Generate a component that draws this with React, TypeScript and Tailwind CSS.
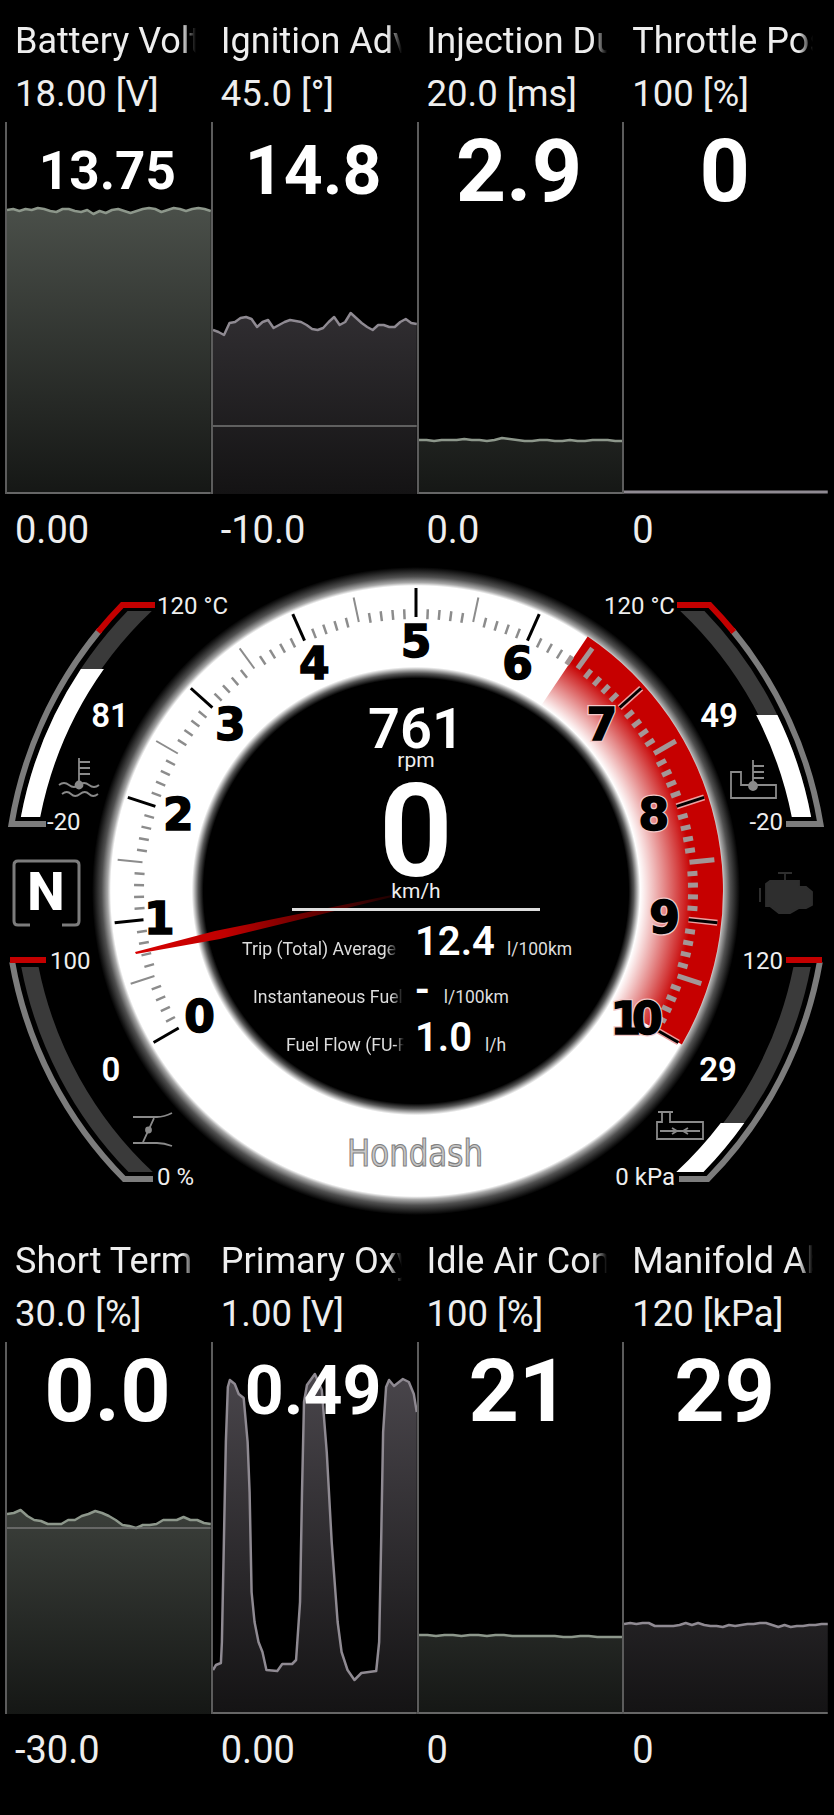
const CX = 416;
const CY = 891;

type Cell = {
  name: string;
  max: string;
  min: string;
  value: string;
  size: string;
  tone: "green" | "purple";
  pts?: number[];
  raw?: [number, number][];
  zero?: number;
  floor?: boolean;
  thick?: boolean;
};

const flat = (base: number, d: number[]) => d.map((n) => base + n);

const top: Cell[] = [
  {
    name: "Battery Voltage", max: "18.00 [V]", min: "0.00", value: "13.75", size: "text-[53px]", tone: "green", floor: true,
    pts: [88, 87, 89, 87, 88, 86, 87, 89, 90, 87, 87, 89, 90, 88, 92, 89, 91, 88, 87, 89, 91, 89, 87, 86, 87, 90, 88, 86, 87, 89, 87, 86, 87, 89],
  },
  {
    name: "Ignition Advance", max: "45.0 [°]", min: "-10.0", value: "14.8", size: "text-[68px]", tone: "purple", zero: 304,
    pts: [208, 210, 213, 201, 200, 196, 195, 197, 205, 200, 198, 206, 203, 200, 198, 199, 200, 203, 207, 208, 206, 200, 195, 203, 200, 191, 196, 201, 205, 208, 203, 203, 205, 205, 200, 197, 201, 202],
  },
  {
    name: "Injection Duration", max: "20.0 [ms]", min: "0.0", value: "2.9", size: "text-[88px]", tone: "green", floor: true,
    pts: flat(318, [0, 0, 1, 0, 0, 0, -1, 0, 0, 1, 0, -2, -1, 0, 1, 1, 0, 0, 1, 1, 0, 1, 1, 0, 0, 0, 1, 1]),
  },
  { name: "Throttle Position", max: "100 [%]", min: "0", value: "0", size: "text-[88px]", tone: "purple", thick: true, pts: [370, 370] },
];

const bottom: Cell[] = [
  {
    name: "Short Term Fuel Trim", max: "30.0 [%]", min: "-30.0", value: "0.0", size: "text-[88px]", tone: "green", zero: 186,
    pts: [172, 171, 168, 174, 178, 179, 182, 182, 182, 178, 178, 174, 172, 169, 171, 174, 178, 183, 184, 186, 183, 183, 182, 178, 178, 178, 175, 178, 178, 181, 182],
  },
  {
    name: "Primary Oxygen Sensor", max: "1.00 [V]", min: "0.00", value: "0.49", size: "text-[68px]", tone: "purple", floor: true,
    raw: [[0, 328], [3, 323], [8, 321], [9, 300], [11, 200], [13, 100], [15, 45], [17, 38], [22, 42], [26, 52], [31, 56], [35, 100], [37, 150], [39, 250], [42, 280], [46, 300], [50, 310], [54, 328], [65, 329], [70, 322], [80, 322], [84, 318], [88, 260], [90, 150], [92, 60], [95, 43], [103, 32], [110, 48], [115, 110], [120, 200], [126, 280], [130, 310], [136, 328], [143, 338], [150, 331], [165, 329], [168, 300], [170, 200], [172, 90], [175, 45], [178, 38], [183, 44], [192, 37], [198, 40], [203, 52], [206, 70]],
  },
  {
    name: "Idle Air Control", max: "100 [%]", min: "0", value: "21", size: "text-[88px]", tone: "green", floor: true,
    pts: flat(293, [0, 0, 1, 0, 0, 1, 0, 0, 1, 0, 0, 1, 1, 1, 1, 1, 1, 2, 2, 1, 1, 2, 2, 2, 2]),
  },
  {
    name: "Manifold Absolute", max: "120 [kPa]", min: "0", value: "29", size: "text-[88px]", tone: "purple", floor: true,
    pts: flat(282, [0, -1, 0, -1, -1, 2, 2, 2, 2, 1, -1, 1, -1, 1, 2, 2, 3, 1, 2, 1, 0, 0, -1, -1, 1, 3, 1, 3, 2, 2, 1, 1, 0, 0]),
  },
];

function Chart({ cell, id }: { cell: Cell; id: string }) {
  const pts: [number, number][] =
    cell.raw ?? (cell.pts ?? []).map((y, i, all) => [(i * 206) / (all.length - 1), y]);
  const line = pts.map(([x, y]) => `${x},${y}`).join(" ");
  const green = cell.tone === "green";
  return (
    <div className="relative h-[372px] border-l-2 border-[#5c5c5c]">
      <svg viewBox="0 0 206 372" preserveAspectRatio="none" className="block h-full w-full">
        <defs>
          <linearGradient id={id} gradientUnits="userSpaceOnUse" x1="0" y1="0" x2="0" y2="372">
            <stop offset="0" stopColor={green ? "#5a6059" : "#4e4a50"} />
            <stop offset="1" stopColor={green ? "#151715" : "#141314"} />
          </linearGradient>
        </defs>
        {!cell.thick && <polygon points={`0,372 ${line} 206,372`} fill={`url(#${id})`} />}
        <polyline points={line} fill="none" stroke={green ? "#8d978b" : "#8f8a92"} strokeWidth={cell.thick ? 3 : 2.5} strokeLinejoin="round" />
        {cell.zero && <line x1="0" x2="206" y1={cell.zero} y2={cell.zero} stroke="#777" strokeWidth="1.5" />}
        {cell.floor && <line x1="0" x2="206" y1="371" y2="371" stroke="#666" strokeWidth="2" />}
      </svg>
      <div className={`absolute -left-[3px] right-0 top-[3px] h-[92px] text-center font-bold leading-[92px] text-white ${cell.size}`}>
        {cell.value}
      </div>
    </div>
  );
}

function Strip({ cells, prefix }: { cells: Cell[]; prefix: string }) {
  return (
    <div className="grid shrink-0 grid-cols-4 pl-[5px] pr-[6px] pt-[15px]">
      {cells.map((c, i) => (
        <div key={c.name} className="min-w-0">
          <div className="h-[52px] overflow-hidden whitespace-nowrap pl-[10px] pr-[15px] text-[36px] leading-[52px] text-[#eeeeee]">
            <div className="overflow-hidden [mask-image:linear-gradient(to_right,black_92%,transparent_100%)]">{c.name}</div>
          </div>
          <div className="mb-[2px] h-[53px] whitespace-nowrap pl-[10px] text-[36.5px] leading-[53px] text-[#eeeeee]">{c.max}</div>
          <Chart cell={c} id={`${prefix}${i}`} />
          <div className="mt-[10px] h-[53px] pl-[10px] text-[38px] leading-[53px] text-[#eeeeee]">{c.min}</div>
        </div>
      ))}
    </div>
  );
}

const polar = (r: number, deg: number): [number, number] => {
  const a = (deg * Math.PI) / 180;
  return [CX + r * Math.sin(a), CY - r * Math.cos(a)];
};

const arcX = (r: number, y: number, side: number) => CX + side * Math.sqrt(r * r - (y - CY) ** 2);

function bandPath(r1: number, r2: number, yA: number, yB: number, side: number) {
  const s = side < 0 ? 0 : 1;
  return `M${arcX(r2, yA, side)} ${yA} A${r2} ${r2} 0 0 ${s} ${arcX(r2, yB, side)} ${yB} L${arcX(r1, yB, side)} ${yB} A${r1} ${r1} 0 0 ${1 - s} ${arcX(r1, yA, side)} ${yA} Z`;
}

function railPath(yA: number, yB: number, side: number) {
  const s = side < 0 ? 0 : 1;
  return `M${arcX(410, yA, side)} ${yA} A410 410 0 0 ${s} ${arcX(410, yB, side)} ${yB}`;
}

const mx = (x: number, side: number) => (side < 0 ? x : 832 - x);

function Rails({ side }: { side: number }) {
  return (
    <g fill="none" strokeWidth="6">
      {/* upper gauge */}
      <path d={`${railPath(630, 824, side)} H${mx(46, side)}`} stroke="#7c7c7c" />
      <path d={`M${mx(155, side)} 605 H${arcX(410, 605, side)} A410 410 0 0 ${side < 0 ? 0 : 1} ${arcX(410, 632, side)} 632`} stroke="#c40000" />
      <path d={bandPath(385, 402, 611, 817, side)} fill="#3a3a3a" stroke="none" />
      {/* lower gauge */}
      <path d={`${railPath(962, 1179, side)} H${mx(153, side)}`} stroke="#7c7c7c" />
      <path d={`M${mx(10, side)} 960 H${mx(46, side)}`} stroke="#c40000" />
      <path d={bandPath(385, 402, 967, 1172, side)} fill="#3a3a3a" stroke="none" />
    </g>
  );
}

function Ticks() {
  const out = [];
  for (let i = 0; i <= 100; i++) {
    const deg = -120 + i * 2.4;
    const red = deg > 33;
    const major = i % 10 === 0;
    const half = i % 5 === 0;
    const [r1, r2] = major ? [274, 303] : half ? [275, 300] : [272, 282];
    const [x1, y1] = polar(r1, deg);
    const [x2, y2] = polar(r2, deg);
    const w = major ? 3 : red ? 5 : half ? 2 : 2.5;
    const color = major ? "#000" : red ? "#a39696" : "#8c8c8c";
    out.push(
      <g key={i}>
        {major && red && <line x1={x1} y1={y1} x2={x2} y2={y2} stroke="#eba0a0" strokeWidth="6" />}
        <line x1={x1} y1={y1} x2={x2} y2={y2} stroke={color} strokeWidth={w} />
      </g>,
    );
  }
  return <g>{out}</g>;
}

function Numerals() {
  return (
    <g fontFamily="'DejaVu Sans', sans-serif" fontWeight="700" fontSize="44" textAnchor="middle">
      {[0, 1, 2, 3, 4, 5, 6, 7, 8, 9].map((n) => {
        const [x, y] = polar(n === 1 ? 258 : 250, -120 + n * 24);
        return (
          <g key={n}>
            {n > 6 && (
              <text x={x} y={y + 16} stroke="#f3c8c8" strokeWidth="4" fill="#f3c8c8">
                {n}
              </text>
            )}
            <text x={x} y={y + 16} fill="#000" stroke="#000" strokeWidth="1.5">
              {n}
            </text>
          </g>
        );
      })}
      <text x="632" y="1034" fill="#f3c8c8" stroke="#f3c8c8" strokeWidth="4" letterSpacing="-9">
        10
      </text>
      <text x="632" y="1034" fill="#000" stroke="#000" strokeWidth="1.5" letterSpacing="-9">
        10
      </text>
    </g>
  );
}

function Icons() {
  return (
    <g fill="none" stroke="#8a8a8a" strokeWidth="1.8">
      {/* coolant */}
      <path d="M79 758V783M79 762H90M79 768H90M79 774H90" />
      <circle cx="79" cy="785" r="3.5" fill="#8a8a8a" />
      <path d="M59 785q5-4 10 0t10 0t10 0t10 0M62 794q5-4 9 0t9 0t9 0t9 0" />
      {/* oil */}
      <path d="M731 798V772H741V785H776V798Z" />
      <path d="M753 760V785M753 766H764M753 772H764M753 778H764" />
      <circle cx="753" cy="786" r="4" fill="#8a8a8a" />
      {/* throttle */}
      <path d="M133 1117H157Q164 1117 172 1113M133 1143H157Q164 1143 172 1146M143 1142L154 1118" />
      <circle cx="148.5" cy="1130" r="2.5" fill="#8a8a8a" />
      {/* manifold */}
      <path d="M658 1112H673M662 1112V1122H657V1139H703V1122H670V1112M660 1131H700M672 1128L677 1131L672 1134M688 1128L683 1131L688 1134" />
      {/* engine */}
      <path
        d="M785 873V880M778 873H792M770 881H799V887H806L812 892V905L806 908H799L790 913H779L770 906H766V884Z"
        fill="#2e2e2e"
        stroke="#2e2e2e"
      />
      <path d="M760 888V902" stroke="#2e2e2e" strokeWidth="2" />
      {/* gear box */}
      <path d="M30 925H18Q14 925 14 921V865Q14 861 18 861H75Q79 861 79 865V921Q79 925 75 925H62" stroke="#7c7c7c" strokeWidth="3" />
    </g>
  );
}

function Face() {
  const [ax, ay] = polar(307, 34);
  const [bx, by] = polar(307, 120);
  const [cx2, cy2] = polar(216, 120);
  const [dx, dy] = polar(216, 34);
  return (
    <svg viewBox="0 557 834 663" className="absolute inset-0 h-full w-full">
      <defs>
        <radialGradient id="face" gradientUnits="userSpaceOnUse" cx={CX} cy={CY} r="324">
          <stop offset="0.656" stopColor="#000" />
          <stop offset="0.672" stopColor="#555" />
          <stop offset="0.692" stopColor="#fff" />
          <stop offset="0.942" stopColor="#fff" />
          <stop offset="0.952" stopColor="#a8a8a8" />
          <stop offset="0.97" stopColor="#505050" />
          <stop offset="1" stopColor="#000" />
        </radialGradient>
        <radialGradient id="redline" gradientUnits="userSpaceOnUse" cx={CX} cy={CY} r="307">
          <stop offset="0.73" stopColor="#c60000" stopOpacity="0" />
          <stop offset="0.9" stopColor="#c60000" />
          <stop offset="1" stopColor="#c60000" />
        </radialGradient>
        <linearGradient id="needle" gradientUnits="userSpaceOnUse" x1="135" y1="951" x2="392" y2="896">
          <stop offset="0" stopColor="#d80000" />
          <stop offset="0.35" stopColor="#c00000" />
          <stop offset="0.65" stopColor="#700000" />
          <stop offset="1" stopColor="#200000" />
        </linearGradient>
      </defs>
      <circle cx={CX} cy={CY} r="324" fill="url(#face)" />
      <path d={`M${ax} ${ay} A307 307 0 0 1 ${bx} ${by} L${cx2} ${cy2} A216 216 0 0 0 ${dx} ${dy} Z`} fill="url(#redline)" />
      <Ticks />
      <Numerals />
      <polygon points="135,952 215,931 392,895 392,897 220,939 136,954" fill="url(#needle)" />
      <text x="415" y="1166" textAnchor="middle" fontSize="38" fontFamily="'DejaVu Sans', sans-serif" fill="#c8c8c8" stroke="#808080" strokeWidth="1.2" textLength="136" lengthAdjust="spacingAndGlyphs">
        Hondash
      </text>

      <Rails side={-1} />
      <Rails side={1} />
      <path d={bandPath(383, 402, 669, 817, -1)} fill="#fff" />
      <path d={bandPath(383, 402, 715, 817, 1)} fill="#fff" />
      <path d={bandPath(383, 402, 1123, 1172, 1)} fill="#fff" />
      <Icons />

      <g fill="#eeeeee" fontSize="24">
        <text x="157" y="614">120 °C</text>
        <text x="675" y="614" textAnchor="end">120 °C</text>
        <text x="47" y="830">-20</text>
        <text x="783" y="830" textAnchor="end">-20</text>
        <text x="50" y="969">100</text>
        <text x="783" y="969" textAnchor="end">120</text>
        <text x="157" y="1185">0 %</text>
        <text x="675" y="1185" textAnchor="end">0 kPa</text>
      </g>
      <g fill="#fff" fontSize="33" fontWeight="600" textAnchor="middle">
        <text x="110" y="727">81</text>
        <text x="719" y="727">49</text>
        <text x="111" y="1081">0</text>
        <text x="718" y="1081">29</text>
      </g>
      <text x="46" y="910" fill="#fff" fontSize="53" fontWeight="800" textAnchor="middle">N</text>
    </svg>
  );
}

const rows = [
  { label: "Trip (Total) Average", labelClass: "w-[156px] mr-[17px]", value: "12.4", unit: "l/100km", gap: "ml-[12px]" },
  { label: "Instantaneous Fuel Consumption", labelClass: "w-[150px] mr-[12px]", value: "-", unit: "l/100km", gap: "ml-[14px]" },
  { label: "Fuel Flow (FU-R)", labelClass: "w-[118px] mr-[11px]", value: "1.0", unit: "l/h", gap: "ml-[13px]" },
];

function Readout() {
  return (
    <div className="absolute left-[216px] top-[144px] flex w-[400px] flex-col items-center text-white">
      <div className="h-[56px] text-[56px] font-semibold leading-[56px]">761</div>
      <div className="-mt-[7px] h-[20px] text-[21px] leading-[20px] text-[#eeeeee]">rpm</div>
      <div className="mt-[12px] h-[100px] text-[130px] font-semibold leading-[100px]">0</div>
      <div className="-mt-[1px] h-[20px] text-[21px] leading-[20px] text-[#eeeeee]">km/h</div>
      <div className="mt-[7px] h-[3px] w-[248px] bg-[#dddddd]" />
      <div className="mt-[9px] w-full">
        {rows.map((r) => (
          <div key={r.label} className="flex h-[48px] items-baseline">
            <div className="flex w-[199px] shrink-0 justify-end">
              <div className={`overflow-hidden whitespace-nowrap text-[17.7px] leading-[44px] text-[#dddddd] [mask-image:linear-gradient(to_right,black_92%,transparent_100%)] ${r.labelClass}`}>
                {r.label}
              </div>
            </div>
            <div className="text-[40px] font-semibold leading-[44px]">{r.value}</div>
            <div className={`text-[17.5px] leading-[44px] text-[#dddddd] ${r.gap}`}>{r.unit}</div>
          </div>
        ))}
      </div>
    </div>
  );
}

export default function App() {
  return (
    <div className="flex h-[1815px] w-[834px] flex-col overflow-hidden bg-black font-['Roboto',sans-serif]">
      <Strip cells={top} prefix="top" />
      <div className="relative h-[663px] shrink-0">
        <Face />
        <Readout />
      </div>
      <Strip cells={bottom} prefix="bot" />
    </div>
  );
}
